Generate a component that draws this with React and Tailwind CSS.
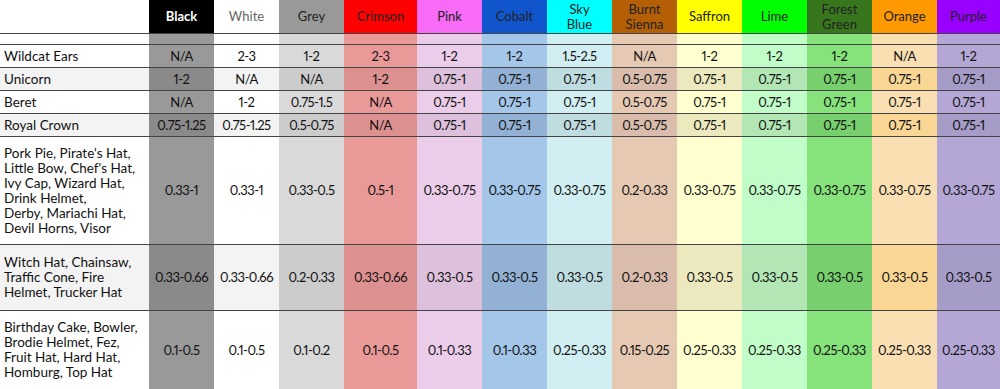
import React from "react";

const cols = [
  { name: "Black", head: "bg-[#000000] text-white font-bold", light: "bg-[#999999]", dark: "bg-[#8a8a8a]" },
  { name: "White", head: "bg-[#ffffff] text-[#666666]", light: "bg-[#ffffff]", dark: "bg-[#f3f3f3]" },
  { name: "Grey", head: "bg-[#999999] text-[#222222]", light: "bg-[#d9d9d9]", dark: "bg-[#cccccc]" },
  { name: "Crimson", head: "bg-[#ff0000] text-[#222222]", light: "bg-[#ea9999]", dark: "bg-[#dd9090]" },
  { name: "Pink", head: "bg-[#f76bf7] text-[#222222]", light: "bg-[#eccde9]", dark: "bg-[#dcc0dc]" },
  { name: "Cobalt", head: "bg-[#1155cc] text-[#222222]", light: "bg-[#a3c6e9]", dark: "bg-[#93b1d4]" },
  { name: "Sky\nBlue", head: "bg-[#00ffff] text-[#222222]", light: "bg-[#d1eff3]", dark: "bg-[#bfdce1]" },
  { name: "Burnt\nSienna", head: "bg-[#b45f06] text-[#222222]", light: "bg-[#e6c9b3]", dark: "bg-[#d9bcab]" },
  { name: "Saffron", head: "bg-[#ffff00] text-[#222222]", light: "bg-[#ffffd0]", dark: "bg-[#ebe9bd]" },
  { name: "Lime", head: "bg-[#00ff00] text-[#222222]", light: "bg-[#c1fdc8]", dark: "bg-[#b2e6b4]" },
  { name: "Forest\nGreen", head: "bg-[#38761d] text-[#222222]", light: "bg-[#86e27a]", dark: "bg-[#77cf6e]" },
  { name: "Orange", head: "bg-[#ff9900] text-[#222222]", light: "bg-[#f9dfb2]", dark: "bg-[#fad694]" },
  { name: "Purple", head: "bg-[#9900ff] text-[#222222]", light: "bg-[#b4a7d6]", dark: "bg-[#a59cc7]" },
];

const rows = [
  { label: [""], h: "h-[11px]", dark: false, vals: Array(13).fill("") },
  { label: ["Wildcat Ears"], h: "h-[23px]", dark: false, vals: ["N/A", "2-3", "1-2", "2-3", "1-2", "1-2", "1.5-2.5", "N/A", "1-2", "1-2", "1-2", "N/A", "1-2"] },
  { label: ["Unicorn"], h: "h-[23px]", dark: true, vals: ["1-2", "N/A", "N/A", "1-2", "0.75-1", "0.75-1", "0.75-1", "0.5-0.75", "0.75-1", "0.75-1", "0.75-1", "0.75-1", "0.75-1"] },
  { label: ["Beret"], h: "h-[23px]", dark: false, vals: ["N/A", "1-2", "0.75-1.5", "N/A", "0.75-1", "0.75-1", "0.75-1", "0.5-0.75", "0.75-1", "0.75-1", "0.75-1", "0.75-1", "0.75-1"] },
  { label: ["Royal Crown"], h: "h-[23px]", dark: true, vals: ["0.75-1.25", "0.75-1.25", "0.5-0.75", "N/A", "0.75-1", "0.75-1", "0.75-1", "0.5-0.75", "0.75-1", "0.75-1", "0.75-1", "0.75-1", "0.75-1"] },
  {
    label: ["Pork Pie, Pirate's Hat,", "Little Bow, Chef's Hat,", "Ivy Cap, Wizard Hat,", "Drink Helmet,", "Derby, Mariachi Hat,", "Devil Horns, Visor"],
    h: "h-[108px]", dark: false,
    vals: ["0.33-1", "0.33-1", "0.33-0.5", "0.5-1", "0.33-0.75", "0.33-0.75", "0.33-0.75", "0.2-0.33", "0.33-0.75", "0.33-0.75", "0.33-0.75", "0.33-0.75", "0.33-0.75"],
  },
  {
    label: ["Witch Hat, Chainsaw,", "Traffic Cone, Fire", "Helmet, Trucker Hat"],
    h: "h-[66px]", dark: true,
    vals: ["0.33-0.66", "0.33-0.66", "0.2-0.33", "0.33-0.66", "0.33-0.5", "0.33-0.5", "0.33-0.5", "0.2-0.33", "0.33-0.5", "0.33-0.5", "0.33-0.5", "0.33-0.5", "0.33-0.5"],
  },
  {
    label: ["Birthday Cake, Bowler,", "Brodie Helmet, Fez,", "Fruit Hat, Hard Hat,", "Homburg, Top Hat"],
    h: "h-[78px]", dark: false, last: true,
    vals: ["0.1-0.5", "0.1-0.5", "0.1-0.2", "0.1-0.5", "0.1-0.33", "0.1-0.33", "0.25-0.33", "0.15-0.25", "0.25-0.33", "0.25-0.33", "0.25-0.33", "0.25-0.33", "0.25-0.33"],
  },
];

export default function App() {
  return (
    <div
      className="w-[1000px] h-[389px] overflow-hidden bg-white text-[13px] leading-[15px] text-[#111111]"
      style={{ fontFamily: "Lato, 'Noto Sans', sans-serif" }}
    >
      <div className="grid grid-cols-[149px_65px_65px_65px_73px_65px_65px_65px_65px_65px_65px_65px_65px_63px]">
        <div className="h-[34px] bg-white border-b border-[#444444]" />
        {cols.map((c) => (
          <div
            key={c.name}
            className={`h-[34px] border-b border-[#444444] flex items-center justify-center text-center whitespace-pre-line ${c.head}`}
          >
            {c.name}
          </div>
        ))}
        {rows.map((r, ri) => (
          <React.Fragment key={ri}>
            <div
              className={`${r.h} ${r.last ? "" : "border-b border-[#444444]"} ${r.dark ? "bg-[#f3f3f3]" : "bg-white"} flex flex-col justify-center pl-1 text-[13.5px]`}
            >
              {r.label.map((l, li) => (
                <div key={li}>{l}</div>
              ))}
            </div>
            {r.vals.map((v, vi) => (
              <div
                key={vi}
                className={`${r.h} ${r.last ? "" : "border-b border-[#444444]"} ${r.dark ? cols[vi].dark : cols[vi].light} flex items-center justify-center proportional-nums text-[13px] tracking-[-0.5px]`}
              >
                {v}
              </div>
            ))}
          </React.Fragment>
        ))}
      </div>
    </div>
  );
}
